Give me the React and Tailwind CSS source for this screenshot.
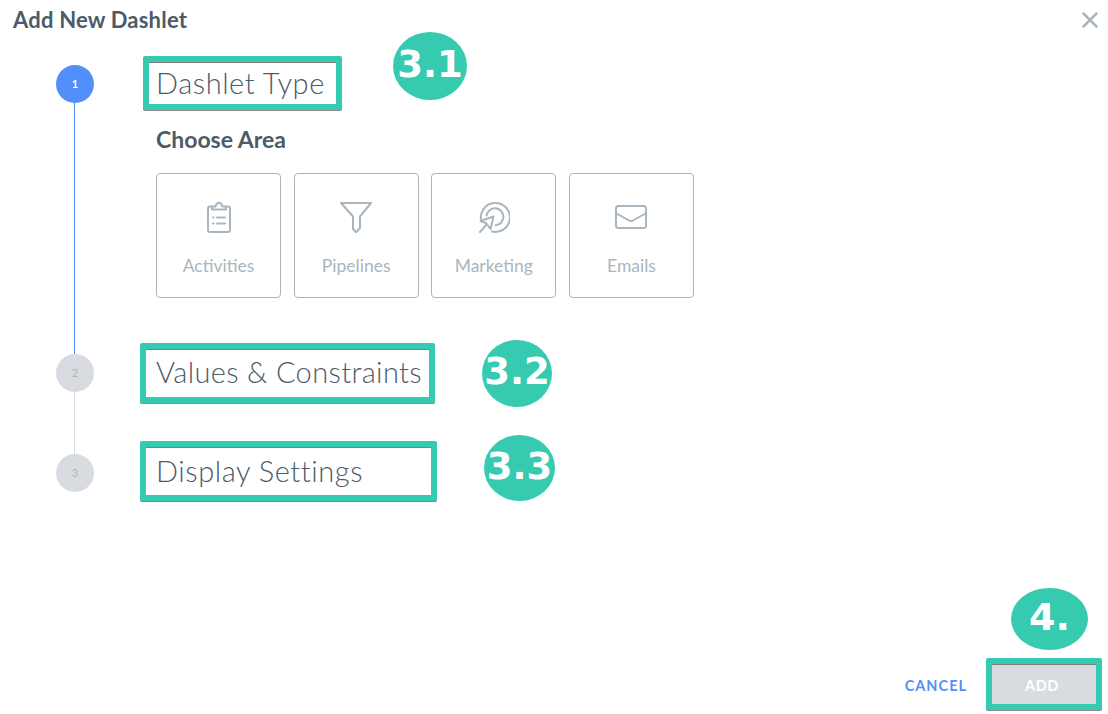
const Badge = ({ className, children }) => (
  <div
    className={`absolute flex items-center justify-center rounded-[50%] bg-[#36cbb0] pb-[3px] text-white font-bold font-['DejaVu_Sans',sans-serif] ${className}`}
  >
    {children}
  </div>
);

const StepTitle = ({ className, children }) => (
  <div
    className={`flex items-center border-[6px] border-[#36cbb0] rounded-[2px] bg-white shadow-[inset_0_1px_0_#808080,0_1px_0_#8a8a8a] font-light text-[29px] text-[#4d5b69] ${className}`}
  >
    {children}
  </div>
);

const Circle = ({ active, children }) => (
  <div
    className={`w-[38px] h-[38px] shrink-0 rounded-full flex items-center justify-center text-[11px] ${
      active ? "bg-[#528ffb] text-white font-bold" : "bg-[#d8dce1] text-[#aab4be]"
    }`}
  >
    {children}
  </div>
);

const ClipboardIcon = () => (
  <svg width="32" height="32" viewBox="0 0 32 32" fill="none" stroke="#a9b5bf" strokeWidth="2" strokeLinecap="round" strokeLinejoin="round">
    <path d="M9 5.500H7a2 2 0 0 0-2 2V29a2 2 0 0 0 2 2h18a2 2 0 0 0 2-2V7.500a2 2 0 0 0-2-2h-2" />
    <path d="M9 8.500V5.500h3.500c.6-2.500 2-3.800 3.500-3.800s2.900 1.300 3.500 3.800H23v3z" />
    <path d="M10 16.500h.6M14 16.500h8M10 22.500h.6M14 22.500h8" />
  </svg>
);

const FunnelIcon = () => (
  <svg width="32" height="32" viewBox="0 0 32 32" fill="none" stroke="#a9b5bf" strokeWidth="2" strokeLinecap="round" strokeLinejoin="round">
    <path d="M1 2h30L20 15.500V27l-3.500 4h-.5l-3-3V15.500z" />
  </svg>
);

const TargetIcon = () => (
  <svg width="32" height="32" viewBox="0 0 32 32" fill="none" stroke="#a9b5bf" strokeWidth="2" strokeLinecap="round" strokeLinejoin="round">
    <path d="M3.500 20.500A14.500 14.500 0 1 1 14 30.500" />
    <path d="M8.500 14.500a8.500 8.500 0 1 1 9.300 9.800" />
    <path d="M10 22L2 31" />
    <path d="M15.500 15.500L2.500 20l5.500 2 4.500 6z" fill="#fff" />
  </svg>
);

const MailIcon = () => (
  <svg width="32" height="24" viewBox="0 0 32 24" fill="none" stroke="#a9b5bf" strokeWidth="2" strokeLinecap="round" strokeLinejoin="round">
    <rect x="1" y="1" width="30" height="22" rx="2.500" />
    <path d="M1.500 8.500l12.500 7a4 4 0 0 0 4 0l12.500-7" />
  </svg>
);

const areas = [
  { label: "Activities", icon: <ClipboardIcon /> },
  { label: "Pipelines", icon: <FunnelIcon /> },
  { label: "Marketing", icon: <TargetIcon /> },
  { label: "Emails", icon: <MailIcon /> },
];

export default function App() {
  return (
    <div className="relative w-[1108px] h-[714px] overflow-hidden bg-white flex flex-col font-['Lato',sans-serif] text-[#4d5b69]">
      {/* Header */}
      <div className="h-[56px] shrink-0 flex items-start justify-between pl-[13px] pr-[9px] pt-[6px]">
        <h1 className="text-[22px] font-bold leading-[28px] tracking-[0.2px]">Add New Dashlet</h1>
        <svg width="18" height="18" viewBox="0 0 18 18" className="mt-[5px]" stroke="#a9b5bf" strokeWidth="2.500" strokeLinecap="round">
          <path d="M2.500 2.500l13 13M15.500 2.500l-13 13" />
        </svg>
      </div>

      {/* Step 1 */}
      <div className="flex h-[298px] shrink-0 pl-[56px]">
        <div className="w-[38px] flex flex-col items-start pt-[9px]">
          <Circle active>1</Circle>
          <div className="ml-[18px] w-px flex-1 bg-[#528ffb]" />
        </div>
        <div className="ml-[49px]">
          <StepTitle className="w-[199px] h-[54px] pl-[7px] pb-[1px] tracking-[0.55px]">Dashlet Type</StepTitle>
          <h2 className="ml-[13px] mt-[14px] text-[23px] font-bold leading-[30px]">Choose Area</h2>
          <div className="ml-[13px] mt-[19px] flex gap-[12.67px]">
            {areas.map((a) => (
              <div key={a.label} className="w-[125px] h-[125px] border border-[#a9b5bf] rounded-[4px] flex flex-col items-center">
                <div className="h-[32px] mt-[27px] flex items-center justify-center">{a.icon}</div>
                <span className="mt-[21px] text-[17.5px] leading-[24px] text-[#a9b5bf]">{a.label}</span>
              </div>
            ))}
          </div>
        </div>
      </div>

      {/* Step 2 */}
      <div className="flex h-[100px] shrink-0 pl-[56px]">
        <div className="w-[38px] flex flex-col items-start">
          <Circle>2</Circle>
          <div className="ml-[18px] w-px flex-1 bg-[#d8dce1]" />
        </div>
        <StepTitle className="ml-[46px] -mt-[11px] w-[295px] h-[60px] pl-[10px] pb-[3px] tracking-[0.35px]">Values &amp; Constraints</StepTitle>
      </div>

      {/* Step 3 */}
      <div className="flex shrink-0 pl-[56px]">
        <div className="w-[38px]">
          <Circle>3</Circle>
        </div>
        <StepTitle className="ml-[46px] -mt-[13px] w-[297px] h-[60px] pl-[10px] pb-[1px] tracking-[0.55px]">Display Settings</StepTitle>
      </div>

      {/* Footer */}
      <div className="mt-auto mb-[4px] mr-[6px] flex items-center justify-end">
        <button className="mr-[19px] pt-[4px] text-[14.5px] font-bold tracking-[1px] text-[#528ffb]">CANCEL</button>
        <button className="w-[116px] h-[52px] pr-[4px] pt-[3px] border-[6px] border-[#36cbb0] rounded-[2px] bg-[#d8dce1] shadow-[inset_0_1px_0_#808080,0_1px_0_#8a8a8a] text-[14.5px] font-bold tracking-[0.6px] text-white">
          ADD
        </button>
      </div>

      {/* Annotation badges */}
      <Badge className="left-[393px] top-[32px] w-[74px] h-[68px] text-[37px]">3.1</Badge>
      <Badge className="left-[482px] top-[340px] w-[70px] h-[67px] text-[37px]">3.2</Badge>
      <Badge className="left-[484px] top-[435px] w-[71px] h-[66px] text-[37px]">3.3</Badge>
      <Badge className="left-[1011px] top-[588px] w-[77px] h-[62px] text-[38px]">4.</Badge>
    </div>
  );
}
